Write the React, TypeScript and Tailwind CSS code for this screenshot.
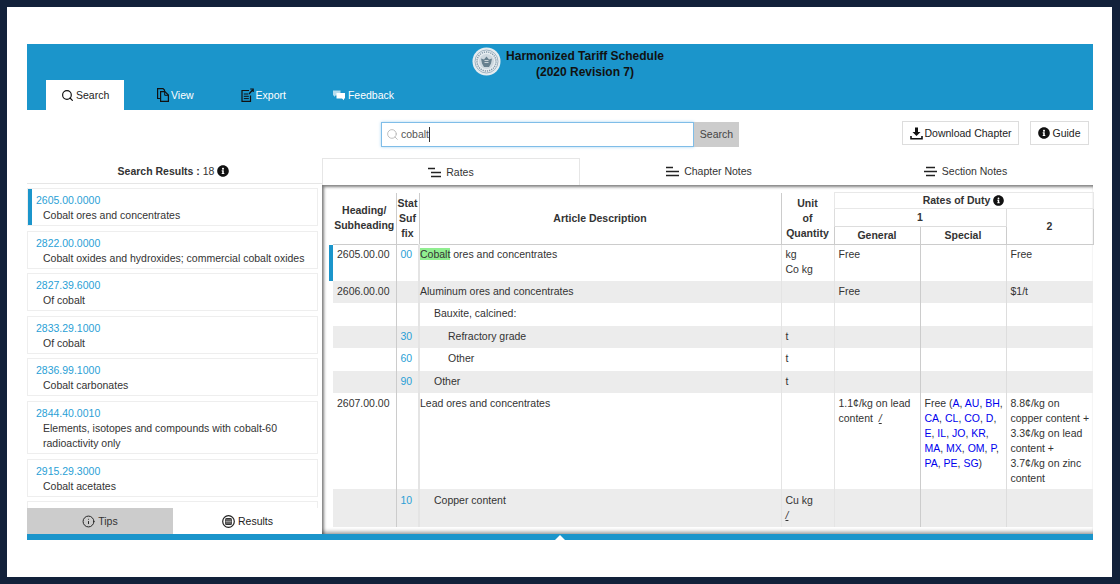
import { FaInfoCircle } from 'react-icons/fa';
import { Search, Info } from 'lucide-react';

const results = [
  { code: '2605.00.0000', desc: 'Cobalt ores and concentrates', active: true },
  { code: '2822.00.0000', desc: 'Cobalt oxides and hydroxides; commercial cobalt oxides' },
  { code: '2827.39.6000', desc: 'Of cobalt' },
  { code: '2833.29.1000', desc: 'Of cobalt' },
  { code: '2836.99.1000', desc: 'Cobalt carbonates' },
  { code: '2844.40.0010', desc: 'Elements, isotopes and compounds with cobalt-60 radioactivity only' },
  { code: '2915.29.3000', desc: 'Cobalt acetates' },
];

const specialLinks = ['A', 'AU', 'BH', 'CA', 'CL', 'CO', 'D', 'E', 'IL', 'JO', 'KR', 'MA', 'MX', 'OM', 'P', 'PA', 'PE', 'SG'];

const SealIcon = () => (
  <svg width="29" height="29" viewBox="0 0 29 29" className="shrink-0">
    <circle cx="14.5" cy="14.5" r="14" fill="#e6ecf0" />
    <circle cx="14.5" cy="14.5" r="11.500" fill="none" stroke="#9fb2c0" strokeWidth="1" />
    <circle cx="14.5" cy="14.5" r="9.500" fill="none" stroke="#7f95a6" strokeWidth="1.400" strokeDasharray="1.200 1" />
    <circle cx="14.5" cy="14.5" r="7.500" fill="#cdd7de" />
    <path d="M9 11.500l3 1 2.500-3 2.500 3 3-1-1 5-2 3.500h-5l-2-3.500z" fill="#67808f" />
    <path d="M12.500 13.500h4M12.500 15.500h4" stroke="#dfe6ea" strokeWidth="0.800" />
  </svg>
);

const ViewIcon = () => (
  <svg width="12" height="14" viewBox="0 0 12 14" fill="none" stroke="#111" strokeWidth="1.200" className="shrink-0">
    <path d="M3 10.500h-2.400v-9.900h5.400l1.500 1.500v0.900" />
    <path d="M3.600 3.600h4.300l3.500 3.500v6.300h-7.800z" />
    <path d="M7.700 3.600v3.700h3.700" strokeWidth="1" />
  </svg>
);

const ExportIcon = () => (
  <svg width="13" height="14" viewBox="0 0 13 14" fill="none" stroke="#111" className="shrink-0">
    <path d="M8 2.500h-7v10.900h8.500v-6" strokeWidth="1.200" />
    <path d="M2.800 6h4.500M2.800 8.300h5M2.800 10.600h5" strokeWidth="1" />
    <path d="M8 6l3.500-4M9.200 1h3v3" strokeWidth="1.200" />
  </svg>
);

const FeedbackIcon = () => (
  <svg width="12" height="11" viewBox="0 0 12 11" className="shrink-0">
    <path d="M0 0.500h7.500v5h-5l-1.500 1.500v-1.500h-1z" fill="#b9dcec" />
    <path d="M3.500 3h8.500v5.500h-1v1.800l-2-1.800h-5.500z" fill="#ffffff" />
  </svg>
);

const DownloadIcon = () => (
  <svg width="13" height="13" viewBox="0 0 13 13" className="shrink-0">
    <path d="M5 0.500h3v4.500h2.500l-4 4-4-4h2.500z" fill="#111" />
    <path d="M1 9v2.800h11v-2.800" fill="none" stroke="#111" strokeWidth="1.600" />
  </svg>
);

// three stacked bars, shifted differently for each of the tabs
const BarsIcon = ({ top, mid, bottom }: { top: string; mid: string; bottom: string }) => (
  <svg width="13" height="11" viewBox="0 0 13 11" stroke="#222" strokeWidth="1.500" className="shrink-0">
    <path d={top} />
    <path d={mid} />
    <path d={bottom} />
  </svg>
);

const ResultsIcon = () => (
  <svg width="13" height="13" viewBox="0 0 13 13" className="shrink-0">
    <circle cx="6.500" cy="6.500" r="5.800" fill="none" stroke="#222" strokeWidth="1.200" />
    <rect x="3" y="3" width="7" height="7" rx="1.500" fill="#333" />
    <path d="M3.500 5h6M3.500 6.500h6M3.500 8h6" stroke="#fff" strokeWidth="0.500" />
  </svg>
);

const App = () => {
  return (
    <div className="w-[1120px] h-[584px] bg-[#12213a] pl-[7px] pr-[8px] py-[7px] font-['Liberation_Sans',Arial,sans-serif] text-[10.5px] leading-[15px] text-[#333]">
      <div className="h-[570px] bg-white pl-[20px] pr-[19px] pt-[37px]">
        {/* Blue header */}
        <div className="h-[66px] bg-[#1b95cb] flex flex-col">
          <div className="flex justify-center items-start gap-[5px] pl-[16px] pt-[3px]">
            <SealIcon />
            <div className="text-center text-[12px] leading-[16px] font-bold text-[#111] pt-[1px]">
              <div>Harmonized Tariff Schedule</div>
              <div>(2020 Revision 7)</div>
            </div>
          </div>
          <div className="mt-auto flex gap-[17px] pl-[19px] text-white">
            <div className="h-[30px] w-[78px] mr-[1px] bg-white text-[#222] flex items-center gap-[2px] px-[15px]">
              <Search size={13} strokeWidth={2.2} color="#111" className="shrink-0" />
              <span>Search</span>
            </div>
            <div className="h-[30px] flex items-center gap-[2px] px-[15px]">
              <ViewIcon />
              <span>View</span>
            </div>
            <div className="h-[30px] flex items-center gap-[2px] px-[15px]">
              <ExportIcon />
              <span>Export</span>
            </div>
            <div className="h-[30px] flex items-center gap-[3px] px-[15px]">
              <FeedbackIcon />
              <span>Feedback</span>
            </div>
          </div>
        </div>

        {/* Search row */}
        <div className="h-[48px] flex items-start">
          <div className="flex mt-[12px] ml-[354px]">
            <div className="w-[313px] h-[25px] bg-white border border-[#7fbde8] shadow-[0_0_3px_#a8d4f2] flex items-center pl-[4px] gap-[2px] text-[#555]">
              <Search size={13} color="#b5b5b5" strokeWidth={1.6} className="shrink-0" />
              <span className="border-r border-[#333]">cobalt</span>
            </div>
            <div className="w-[45px] h-[25px] bg-[#cccccc] flex items-center justify-center text-[#444]">Search</div>
          </div>
          <div className="flex gap-[11px] mt-[11px] ml-auto mr-[4px]">
            <div className="w-[117px] h-[24px] border border-[#ddd] flex items-center justify-center gap-[2px] text-[#222]">
              <DownloadIcon />
              <span>Download Chapter</span>
            </div>
            <div className="w-[59px] h-[24px] border border-[#ddd] flex items-center justify-center gap-[2px] text-[#222]">
              <FaInfoCircle size={12} color="#111" />
              <span>Guide</span>
            </div>
          </div>
        </div>

        {/* Results column and rates panel */}
        <div className="flex">
          <div className="w-[295px] shrink-0 flex flex-col h-[376px]">
            <div className="h-[26px] pt-[1px] pr-[2px] flex items-center justify-center gap-[3px] border-b border-[#e6e6e6] text-[#333]">
              <span><b>Search Results :</b> 18</span>
              <FaInfoCircle size={12} color="#111" />
            </div>
            <div className="h-[324px] overflow-hidden pt-[4px] pr-[4px] flex flex-col gap-[4.600px]">
              {results.map((item) => (
                <div key={item.code} className="border border-[#eeeeee] flex shrink-0">
                  <div className={item.active ? 'w-[4px] bg-[#1b95cb]' : 'w-[4px]'} />
                  <div className="pt-[4px] pb-[2px] pl-[4px]">
                    <div className="text-[#2a9fd6]">{item.code}</div>
                    <div className="pl-[7px] w-[275px]">{item.desc}</div>
                  </div>
                </div>
              ))}
              {/* next row is scrolled away, only its top edge shows */}
              <div className="h-[38px] border border-[#eeeeee] shrink-0" />
            </div>
            <div className="h-[26px] flex">
              <div className="w-[146px] bg-[#cccccc] flex items-center justify-center gap-[3px]">
                <Info size={13} strokeWidth={1.800} color="#222" />
                <span>Tips</span>
              </div>
              <div className="flex-1 bg-white flex items-center justify-center gap-[3px] text-[#222]">
                <ResultsIcon />
                <span>Results</span>
              </div>
            </div>
          </div>

          <div className="flex-1 min-w-0 flex flex-col">
            <div className="h-[27px] flex text-[#333]">
              <div className="w-[258px] border border-[#e6e6e6] border-b-0 flex items-center justify-center gap-[5px]">
                <BarsIcon top="M0 1.500h7" mid="M3 5.500h10" bottom="M3 9.500h10" />
                <span>Rates</span>
              </div>
              <div className="w-[258px] flex items-center justify-center gap-[5px]">
                <BarsIcon top="M0 1.500h7" mid="M0 5.500h13" bottom="M0 9.500h13" />
                <span>Chapter Notes</span>
              </div>
              <div className="flex-1 flex items-center justify-center gap-[5px]">
                <BarsIcon top="M2 1.500h9" mid="M0 5.500h13" bottom="M2 9.500h9" />
                <span>Section Notes</span>
              </div>
            </div>
            <div className="h-[349px] pl-[7px] pt-[7px] shadow-[inset_2px_2px_3px_rgba(0,0,0,0.5),inset_0_-5px_4px_-3px_rgba(0,0,0,0.4)]">
              <table className="w-[764px] table-fixed border-collapse">
                <colgroup>
                  <col className="w-[4px]" />
                  <col className="w-[63px]" />
                  <col className="w-[23px]" />
                  <col className="w-[362px]" />
                  <col className="w-[53px]" />
                  <col className="w-[86px]" />
                  <col className="w-[86px]" />
                  <col className="w-[87px]" />
                </colgroup>
                <thead className="font-bold text-center">
                  <tr className="h-[16px]">
                    <th rowSpan={3} className="p-0" />
                    <th rowSpan={3} className="p-0 border-b border-[#ccc]">Heading/<br />Subheading</th>
                    <th rowSpan={3} className="p-0 border-b border-l border-[#ccc]">Stat<br />Suf<br />fix</th>
                    <th rowSpan={3} className="p-0 border-b border-l border-[#ccc]">Article Description</th>
                    <th rowSpan={3} className="p-0 border-b border-l border-[#ccc]">Unit<br />of<br />Quantity</th>
                    <th colSpan={3} className="p-0 border border-[#e8e8e8]">
                      <span className="inline-flex items-center gap-[3px]">Rates of Duty <FaInfoCircle size={11} color="#111" /></span>
                    </th>
                  </tr>
                  <tr className="h-[18px]">
                    <th colSpan={2} className="p-0 border border-[#ddd]">1</th>
                    <th rowSpan={2} className="p-0 border border-[#ccc]">2</th>
                  </tr>
                  <tr className="h-[18px]">
                    <th className="p-0 border-b border-l border-[#ccc]">General</th>
                    <th className="p-0 border-b border-l border-[#ccc]">Special</th>
                  </tr>
                </thead>
                <tbody className="font-normal align-top">
                  <tr className="h-[36px] [&>td]:pt-[2px]">
                    <td className="bg-[#1b95cb]" />
                    <td className="pl-[4px]">2605.00.00</td>
                    <td className="pl-[4px] border-l border-[#ccc] text-[#2a9fd6]">00</td>
                    <td className="border-l-2 border-[#e4e4e4]"><span className="bg-[#90ee90]">Cobalt</span> ores and concentrates</td>
                    <td className="pl-[4px] border-l border-[#e4e4e4]">kg<br />Co kg</td>
                    <td className="pl-[4px] border-l border-[#e4e4e4]">Free</td>
                    <td className="border-l border-[#ccc]" />
                    <td className="pl-[4px] border-l border-[#ddd]">Free</td>
                  </tr>
                  <tr className="h-[22px] [&>td]:pt-[3px]">
                    <td />
                    <td className="pl-[4px] bg-[#ececec]">2606.00.00</td>
                    <td className="bg-[#ececec] border-l border-[#ccc]" />
                    <td className="bg-[#ececec] border-l-2 border-[#e4e4e4]">Aluminum ores and concentrates</td>
                    <td className="bg-[#ececec] border-l border-[#e4e4e4]" />
                    <td className="pl-[4px] bg-[#ececec] border-l border-[#e4e4e4]">Free</td>
                    <td className="bg-[#ececec] border-l border-[#ccc]" />
                    <td className="pl-[4px] bg-[#ececec] border-l border-[#ddd]">$1/t</td>
                  </tr>
                  <tr className="h-[23px] [&>td]:pt-[3px]">
                    <td />
                    <td />
                    <td className="border-l border-[#ccc]" />
                    <td className="pl-[14px] border-l-2 border-[#e4e4e4]">Bauxite, calcined:</td>
                    <td className="border-l border-[#e4e4e4]" />
                    <td className="border-l border-[#e4e4e4]" />
                    <td className="border-l border-[#ccc]" />
                    <td className="border-l border-[#ddd]" />
                  </tr>
                  <tr className="h-[22px] [&>td]:pt-[3px]">
                    <td />
                    <td className="bg-[#ececec]" />
                    <td className="pl-[4px] bg-[#ececec] border-l border-[#ccc] text-[#2a9fd6]">30</td>
                    <td className="pl-[28px] bg-[#ececec] border-l-2 border-[#e4e4e4]">Refractory grade</td>
                    <td className="pl-[4px] bg-[#ececec] border-l border-[#e4e4e4]">t</td>
                    <td className="bg-[#ececec] border-l border-[#e4e4e4]" />
                    <td className="bg-[#ececec] border-l border-[#ccc]" />
                    <td className="bg-[#ececec] border-l border-[#ddd]" />
                  </tr>
                  <tr className="h-[23px] [&>td]:pt-[3px]">
                    <td />
                    <td />
                    <td className="pl-[4px] border-l border-[#ccc] text-[#2a9fd6]">60</td>
                    <td className="pl-[28px] border-l-2 border-[#e4e4e4]">Other</td>
                    <td className="pl-[4px] border-l border-[#e4e4e4]">t</td>
                    <td className="border-l border-[#e4e4e4]" />
                    <td className="border-l border-[#ccc]" />
                    <td className="border-l border-[#ddd]" />
                  </tr>
                  <tr className="h-[22px] [&>td]:pt-[3px]">
                    <td />
                    <td className="bg-[#ececec]" />
                    <td className="pl-[4px] bg-[#ececec] border-l border-[#ccc] text-[#2a9fd6]">90</td>
                    <td className="pl-[14px] bg-[#ececec] border-l-2 border-[#e4e4e4]">Other</td>
                    <td className="pl-[4px] bg-[#ececec] border-l border-[#e4e4e4]">t</td>
                    <td className="bg-[#ececec] border-l border-[#e4e4e4]" />
                    <td className="bg-[#ececec] border-l border-[#ccc]" />
                    <td className="bg-[#ececec] border-l border-[#ddd]" />
                  </tr>
                  <tr className="h-[96px] [&>td]:pt-[3px]">
                    <td />
                    <td className="pl-[4px]">2607.00.00</td>
                    <td className="border-l border-[#ccc]" />
                    <td className="border-l-2 border-[#e4e4e4]">Lead ores and concentrates</td>
                    <td className="border-l border-[#e4e4e4]" />
                    <td className="pl-[4px] pr-[3px] border-l border-[#e4e4e4]">1.1¢/kg on lead content&nbsp; <span className="italic underline">/</span></td>
                    <td className="pl-[4px] pr-[2px] border-l border-[#ccc]">
                      Free (
                      {specialLinks.map((link, i) => (
                        <span key={link}>
                          <span className="text-[#0000ee]">{link}</span>
                          {i < specialLinks.length - 1 ? ', ' : ''}
                        </span>
                      ))}
                      )
                    </td>
                    <td className="pl-[4px] pr-[2px] border-l border-[#ddd]">8.8¢/kg on copper content + 3.3¢/kg on lead content + 3.7¢/kg on zinc content</td>
                  </tr>
                  <tr className="h-[38px] [&>td]:pt-[4px]">
                    <td />
                    <td className="bg-[#ececec]" />
                    <td className="pl-[4px] bg-[#ececec] border-l border-[#ccc] text-[#2a9fd6]">10</td>
                    <td className="pl-[14px] bg-[#ececec] border-l-2 border-[#e4e4e4]">Copper content</td>
                    <td className="pl-[4px] bg-[#ececec] border-l border-[#e4e4e4]">Cu kg<br /><span className="italic underline">/</span></td>
                    <td className="bg-[#ececec] border-l border-[#e4e4e4]" />
                    <td className="bg-[#ececec] border-l border-[#ccc]" />
                    <td className="bg-[#ececec] border-l border-[#ddd]" />
                  </tr>
                </tbody>
              </table>
            </div>
          </div>
        </div>

        {/* Bottom bar with the little notch */}
        <div className="h-[6px] bg-[#1b95cb] flex justify-center items-end">
          <div className="w-0 h-0 border-x-[5px] border-x-transparent border-b-[5px] border-b-white" />
        </div>
      </div>
    </div>
  );
};

export default App;
